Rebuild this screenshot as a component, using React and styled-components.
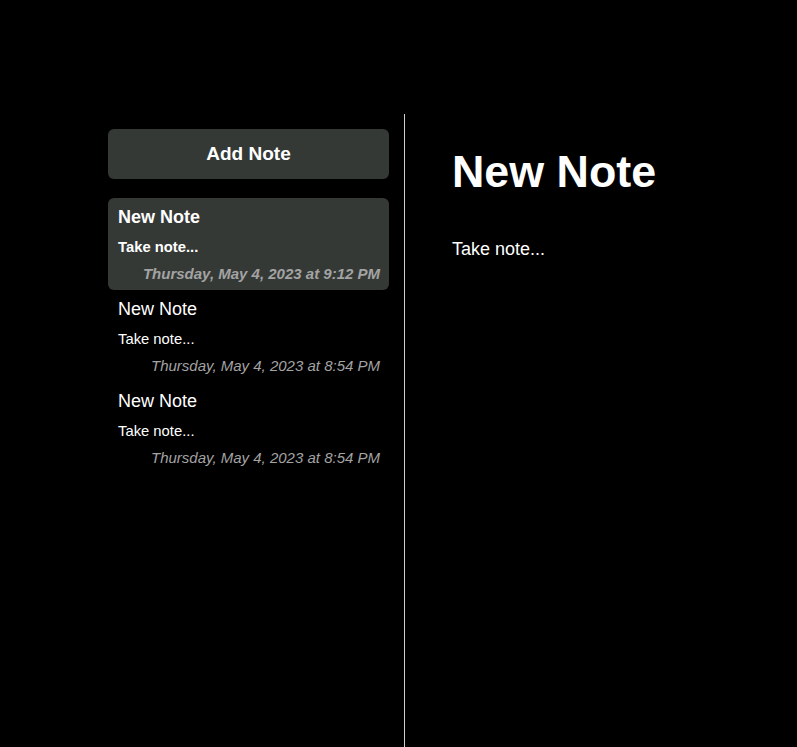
import styled, { createGlobalStyle } from "styled-components"

const GlobalStyle = createGlobalStyle`
  html, body {
    margin: 0;
    padding: 0;
    background: #000;
    color: #fff;
    font-family: "Liberation Sans", Arial, sans-serif;
  }
`

const Page = styled.div`
  display: flex;
  min-height: 747px;
  padding: 114px 0 0 93px;
  box-sizing: border-box;
`

const Sidebar = styled.aside`
  width: 281px;
  padding: 15px 15px 0 15px;
  border-right: 1px solid #d0d0d0;
  display: flex;
  flex-direction: column;
`

const AddButton = styled.button`
  height: 50px;
  border: none;
  border-radius: 6px;
  background: #353936;
  color: #fff;
  font-family: inherit;
  font-size: 19px;
  font-weight: bold;
  cursor: pointer;
  margin-bottom: 19px;
`

const Card = styled.div`
  height: 92px;
  box-sizing: border-box;
  padding: 9px 9px 9px 10px;
  border-radius: 6px;
  background: ${props => props.selected ? '#353936' : 'transparent'};
  font-weight: ${props => props.selected ? 'bold' : 'normal'};
  display: flex;
  flex-direction: column;
`

const CardTitle = styled.div`
  font-size: 18px;
  line-height: 21px;
`

const CardBody = styled.div`
  font-size: 14.8px;
  line-height: 16px;
  margin-top: 11px;
`

const CardDate = styled.div`
  font-size: 15px;
  line-height: 16px;
  margin-top: 11px;
  font-style: italic;
  color: #a3a3a3;
  text-align: right;
`

const Main = styled.main`
  flex: 1;
  padding: 31px 48px 0 47px;
`

const Heading = styled.h1`
  margin: 0;
  font-size: 44.8px;
  line-height: 52px;
  font-weight: bold;
`

const Body = styled.p`
  margin: 41px 0 0 0;
  font-size: 18px;
  line-height: 22px;
`

const notes = [
  { id: 1, title: "New Note", body: "Take note...", date: "Thursday, May 4, 2023 at 9:12 PM" },
  { id: 2, title: "New Note", body: "Take note...", date: "Thursday, May 4, 2023 at 8:54 PM" },
  { id: 3, title: "New Note", body: "Take note...", date: "Thursday, May 4, 2023 at 8:54 PM" },
]

export default function App() {
  const selectedId = 1
  const current = notes.find(n => n.id === selectedId)

  return (
    <>
      <GlobalStyle />
      <Page>
        <Sidebar>
          <AddButton type='button'>Add Note</AddButton>
          {notes.map(note => (
            <Card key={note.id} selected={note.id === selectedId}>
              <CardTitle>{note.title}</CardTitle>
              <CardBody>{note.body}</CardBody>
              <CardDate>{note.date}</CardDate>
            </Card>
          ))}
        </Sidebar>
        <Main>
          <Heading>{current.title}</Heading>
          <Body>{current.body}</Body>
        </Main>
      </Page>
    </>
  )
}
